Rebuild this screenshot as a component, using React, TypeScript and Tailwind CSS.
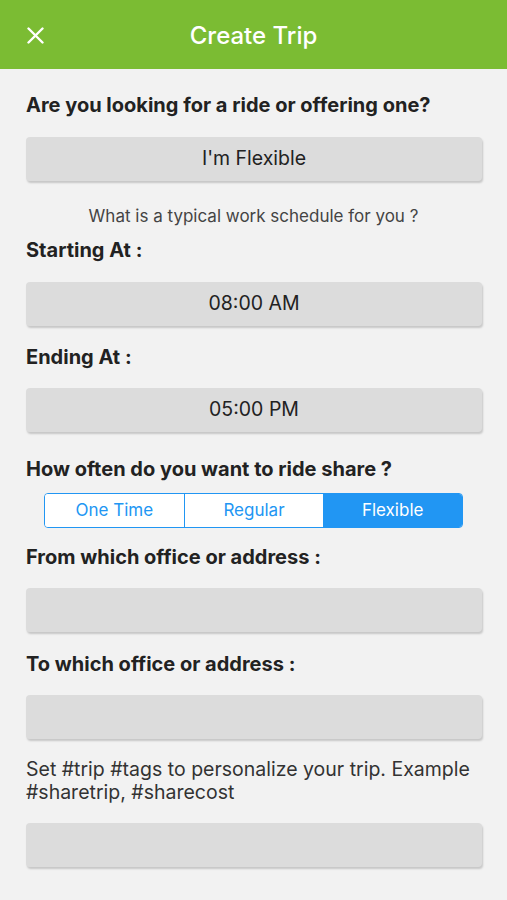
import React from "react";

const font = { fontFamily: '"Inter", "Liberation Sans", sans-serif' };

function Box({ children }: { children?: React.ReactNode }) {
  return (
    <div className="h-[44px] w-[456px] rounded-[4px] bg-[#dcdcdc] shadow-[1px_2px_2px_rgba(0,0,0,0.18)] flex items-center justify-center text-[19.5px] text-[#222222]">
      {children}
    </div>
  );
}

function Heading({ children, className = "" }: { children: React.ReactNode; className?: string }) {
  return (
    <div className={`text-[20px] leading-[24px] font-bold text-[#222222] ${className}`}>{children}</div>
  );
}

export default function App() {
  return (
    <div className="w-[507px] h-[900px] bg-[#f2f2f2] overflow-hidden" style={font}>
      <div className="h-[69px] bg-[#7bbc33] flex items-center relative">
        <div className="absolute left-[27px] top-[27px]">
          <svg width="17" height="17" viewBox="0 0 17 17" fill="none">
            <path d="M1.5 1.5L15.5 15.5M15.5 1.5L1.5 15.5" stroke="white" strokeWidth="2.4" strokeLinecap="round" />
          </svg>
        </div>
        <div className="w-full text-center text-white text-[24px] font-medium pt-[2px]">Create Trip</div>
      </div>
      <div className="px-[26px] flex flex-col">
        <Heading className="mt-[24px]">Are you looking for a ride or offering one?</Heading>
        <div className="mt-[20px]"><Box>I'm Flexible</Box></div>
        <div className="mt-[25px] text-center text-[17px] leading-[20px] text-[#444444]">
          What is a typical work schedule for you ?
        </div>
        <Heading className="mt-[12px]">Starting At :</Heading>
        <div className="mt-[20px]"><Box>08:00 AM</Box></div>
        <Heading className="mt-[19px]">Ending At :</Heading>
        <div className="mt-[19px]"><Box>05:00 PM</Box></div>
        <Heading className="mt-[25px]">How often do you want to ride share ?</Heading>
        <div className="mt-[12px] ml-[18px] w-[419px] h-[35px] flex border-[1.5px] border-[#2196f3] rounded-[4px] overflow-hidden text-[17px]">
          <div className="flex-1 flex items-center justify-center text-[#2196f3] bg-white border-r-[1.5px] border-[#2196f3]">One Time</div>
          <div className="flex-1 flex items-center justify-center text-[#2196f3] bg-white">Regular</div>
          <div className="flex-1 flex items-center justify-center text-white bg-[#2196f3]">Flexible</div>
        </div>
        <Heading className="mt-[17px]">From which office or address :</Heading>
        <div className="mt-[19px]"><Box /></div>
        <Heading className="mt-[20px]">To which office or address :</Heading>
        <div className="mt-[19px]"><Box /></div>
        <div className="mt-[19px] text-[19.5px] leading-[23px] text-[#333333]">
          Set #trip #tags to personalize your trip. Example #sharetrip, #sharecost
        </div>
        <div className="mt-[19px]"><Box /></div>
      </div>
    </div>
  );
}
